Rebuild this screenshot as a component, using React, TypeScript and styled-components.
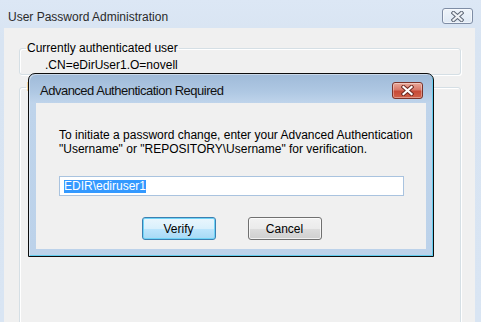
import React from 'react';
import styled, { createGlobalStyle } from 'styled-components';

const UI_FONT = '"Liberation Sans", Arial, sans-serif';

const GlobalStyle = createGlobalStyle`
  html, body {
    margin: 0;
    padding: 0;
  }
  body {
    width: 481px;
    height: 322px;
    overflow: hidden;
    font-family: ${UI_FONT};
    font-size: 12px;
    color: #000;
  }
`;

const CloseGlyph = ({ fill, outline }: { fill: string; outline: string }) => (
    <svg width="13" height="11" viewBox="0 0 13 11">
        <path d="M2.5 2 L10.5 9 M10.5 2 L2.5 9" stroke={outline} strokeWidth="4.2" strokeLinecap="square" />
        <path d="M2.5 2 L10.5 9 M10.5 2 L2.5 9" stroke={fill} strokeWidth="2.2" strokeLinecap="square" />
    </svg>
);

export default function App() {
    return (
        <>
            <GlobalStyle />
            <Window>
                <TitleBar>
                    <WindowTitle>User Password Administration</WindowTitle>
                    <FrameClose>
                        <CloseGlyph fill="#eef1f5" outline="#5d6675" />
                    </FrameClose>
                </TitleBar>
                <Client>
                    <Group>
                        <Legend>Currently authenticated user</Legend>
                        <UserDn>.CN=eDirUser1.O=novell</UserDn>
                    </Group>
                    <Group $grow>
                        <Legend>New password</Legend>
                    </Group>
                </Client>

                <Dialog>
                    <DialogTitleBar>
                        <DialogTitle>Advanced Authentication Required</DialogTitle>
                        <RedClose>
                            <CloseGlyph fill="#ffffff" outline="#6e2a22" />
                        </RedClose>
                    </DialogTitleBar>
                    <DialogBody>
                        <Message>
                            To initiate a password change, enter your Advanced Authentication
                            <br />
                            "Username" or "REPOSITORY\Username" for verification.
                        </Message>
                        <TextBox>
                            <Selected>EDIR\ediruser1</Selected>
                        </TextBox>
                        <ButtonRow>
                            <PushButton $primary>Verify</PushButton>
                            <PushButton>Cancel</PushButton>
                        </ButtonRow>
                    </DialogBody>
                </Dialog>
            </Window>
        </>
    );
}

const Window = styled.div`
  position: relative;
  width: 481px;
  height: 322px;
  display: flex;
  flex-direction: column;
  background: linear-gradient(to bottom, #dce7f5, #d8e4f2 40px, #d9e5f3);
  overflow: hidden;
`;

const TitleBar = styled.div`
  display: flex;
  align-items: center;
  justify-content: space-between;
  height: 24px;
  padding: 4px 8px 0 8px;
`;

const WindowTitle = styled.div`
  color: #2a2a2a;
  font-size: 12px;
  padding-top: 1px;
`;

const FrameClose = styled.div`
  width: 31px;
  height: 16px;
  box-sizing: border-box;
  border: 1px solid #7f8da5;
  border-radius: 3px;
  background: linear-gradient(to bottom, rgba(255, 255, 255, 0.55), rgba(255, 255, 255, 0.15));
  box-shadow: inset 0 0 0 1px rgba(255, 255, 255, 0.5);
  display: flex;
  align-items: center;
  justify-content: center;
`;

const Client = styled.div`
  flex: 1;
  margin: 0 6px 0 4px;
  padding: 13px 14px 0 15px;
  background: #f0f0f0;
  display: flex;
  flex-direction: column;
  gap: 5px;
  overflow: hidden;
`;

const Group = styled.fieldset<{ $grow?: boolean }>`
  margin: 0;
  padding: 3px 8px 2px 6px;
  border: 1px solid #d5dfe5;
  border-radius: 3px;
  box-shadow: inset 1px 1px 0 #ffffff, 1px 1px 0 #ffffff;
  min-height: ${(p) => (p.$grow ? '300px' : 'auto')};
`;

const Legend = styled.legend`
  padding: 0 1px;
  line-height: 14px;
  color: #000;
`;

const UserDn = styled.div`
  padding-left: 19px;
  line-height: 14px;
`;

const Dialog = styled.div`
  position: absolute;
  left: 28px;
  top: 73px;
  width: 406px;
  height: 184px;
  box-sizing: border-box;
  border: 1px solid #0d0d0d;
  border-radius: 7px 7px 0 0;
  padding: 0 7px 7px 7px;
  display: flex;
  flex-direction: column;
  background: linear-gradient(to bottom, #9fbad8 0, #afc8e3 18px, #bfd4eb 29px, #bcd2ea 100%);
  box-shadow: inset 1px 1px 0 rgba(255, 255, 255, 0.45), inset -1px -1px 0 #62cdef;
`;

const DialogTitleBar = styled.div`
  display: flex;
  align-items: center;
  justify-content: space-between;
  height: 29px;
  box-sizing: border-box;
  padding: 4px 3px 0 4px;
`;

const DialogTitle = styled.div`
  font-size: 13px;
  letter-spacing: -0.5px;
  color: #111;
`;

const RedClose = styled.div`
  width: 31px;
  height: 17px;
  box-sizing: border-box;
  border: 1px solid #7b332a;
  border-radius: 3px;
  background: linear-gradient(to bottom, #e9a99a 0%, #d8796a 45%, #c74a37 55%, #d2624a 100%);
  box-shadow: inset 0 0 0 1px rgba(255, 255, 255, 0.35);
  display: flex;
  align-items: center;
  justify-content: center;
`;

const DialogBody = styled.div`
  flex: 1;
  background: #f0f0f0;
  padding: 25px 22px 0 23px;
  display: flex;
  flex-direction: column;
`;

const Message = styled.div`
  line-height: 14px;
  white-space: nowrap;
  color: #000;
`;

const TextBox = styled.div`
  margin-top: 20px;
  height: 20px;
  box-sizing: border-box;
  border: 1px solid #a9c3df;
  background: #fff;
  padding: 3px 4px;
  display: flex;
`;

const Selected = styled.span`
  background: #3399ff;
  color: #fff;
  line-height: 13px;
  height: 13px;
`;

const ButtonRow = styled.div`
  margin-top: 21px;
  display: flex;
  justify-content: center;
  gap: 32px;
`;

const PushButton = styled.div<{ $primary?: boolean }>`
  width: 74px;
  height: 23px;
  box-sizing: border-box;
  border-radius: 3px;
  display: flex;
  align-items: center;
  justify-content: center;
  color: #000;
  border: 1px solid ${(p) => (p.$primary ? '#3c7fb1' : '#707070')};
  background: ${(p) =>
        p.$primary
            ? 'linear-gradient(to bottom, #eaf6fd 0%, #d9f0fc 50%, #bee6fd 50%, #a7d9f5 100%)'
            : 'linear-gradient(to bottom, #f2f2f2 0%, #ebebeb 50%, #dddddd 50%, #cfcfcf 100%)'};
  box-shadow: inset 0 0 0 1px ${(p) => (p.$primary ? '#6fd4f7' : 'rgba(255, 255, 255, 0.7)')};
`;
